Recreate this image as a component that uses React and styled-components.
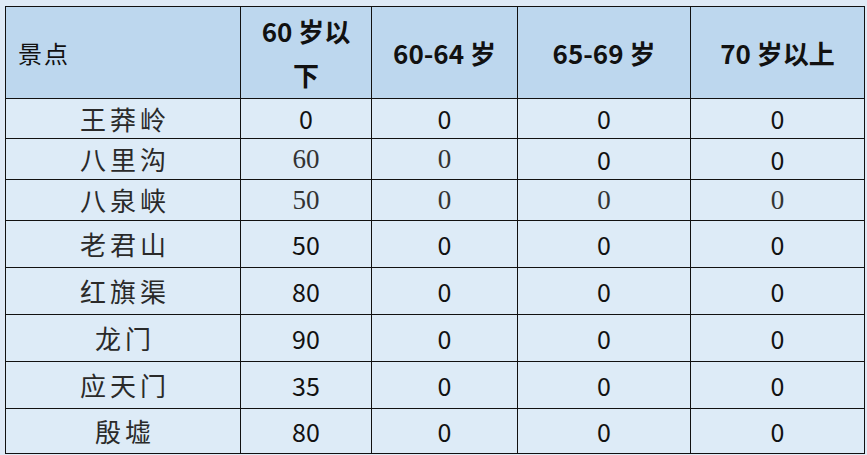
import React from "react";
import styled, { createGlobalStyle } from "styled-components";

const GlobalStyle = createGlobalStyle`
  html, body {
    margin: 0;
    padding: 0;
    background: #dfeaf6;
  }
`;

const Page = styled.div`
  width: 867px;
  height: 455px;
  padding: 6px 0 0 5px;
  box-sizing: border-box;
  background: #dfeaf6;
`;

const Table = styled.table`
  border-collapse: collapse;
  table-layout: fixed;
  width: 859px;
  color: #111;
  font-family: "Noto Sans CJK SC", sans-serif;
`;

const HeadCell = styled.th`
  height: 92px;
  padding: 0 ${(p) => (p.$left ? "12px" : "14px")};
  background: #bdd7ee;
  border: 1px solid #111;
  text-align: ${(p) => (p.$left ? "left" : "center")};
  font-size: ${(p) => (p.$left ? "24px" : "26px")};
  letter-spacing: ${(p) => (p.$left ? "2px" : "0")};
  font-weight: ${(p) => (p.$left ? 400 : 700)};
  line-height: 44px;
  box-sizing: border-box;
`;

const Row = styled.tr`
  height: ${(p) => p.$h}px;
`;

const Cell = styled.td`
  padding: 0;
  background: #ddebf7;
  border: 1px solid #111;
  text-align: center;
  vertical-align: middle;
  line-height: 1;
  font-size: ${(p) => (p.$serif ? "27px" : "25px")};
  font-family: ${(p) =>
    p.$serif
      ? '"Liberation Serif", "Noto Sans CJK SC", serif'
      : '"Noto Sans CJK SC", sans-serif'};
  font-weight: 400;
  color: ${(p) => (p.$serif ? "#333" : "#111")};
`;

const NameCell = styled(Cell)`
  font-family: "Noto Sans CJK SC", sans-serif;
  font-size: 26px;
  letter-spacing: 4px;
  padding-left: 4px;
  color: #2a2a2a;
`;

const columns = [235, 131, 146, 173, 174];

const rows = [
  { name: "王莽岭", vals: ["0", "0", "0", "0"], h: 40, serif: [false, false, false, false] },
  { name: "八里沟", vals: ["60", "0", "0", "0"], h: 41, serif: [true, true, false, false] },
  { name: "八泉峡", vals: ["50", "0", "0", "0"], h: 41, serif: [true, true, true, true] },
  { name: "老君山", vals: ["50", "0", "0", "0"], h: 47 },
  { name: "红旗渠", vals: ["80", "0", "0", "0"], h: 47 },
  { name: "龙门", vals: ["90", "0", "0", "0"], h: 47 },
  { name: "应天门", vals: ["35", "0", "0", "0"], h: 47 },
  { name: "殷墟", vals: ["80", "0", "0", "0"], h: 45 },
];

export default function App() {
  return (
    <>
      <GlobalStyle />
      <Page>
        <Table>
          <colgroup>
            {columns.map((w, i) => (
              <col key={i} style={{ width: w }} />
            ))}
          </colgroup>
          <thead>
            <tr>
              <HeadCell $left>景点</HeadCell>
              <HeadCell>60 岁以下</HeadCell>
              <HeadCell>60-64 岁</HeadCell>
              <HeadCell>65-69 岁</HeadCell>
              <HeadCell>70 岁以上</HeadCell>
            </tr>
          </thead>
          <tbody>
            {rows.map((r) => (
              <Row key={r.name} $h={r.h}>
                <NameCell>{r.name}</NameCell>
                {r.vals.map((v, i) => (
                  <Cell key={i} $serif={r.serif ? r.serif[i] : false}>
                    {v}
                  </Cell>
                ))}
              </Row>
            ))}
          </tbody>
        </Table>
      </Page>
    </>
  );
}
